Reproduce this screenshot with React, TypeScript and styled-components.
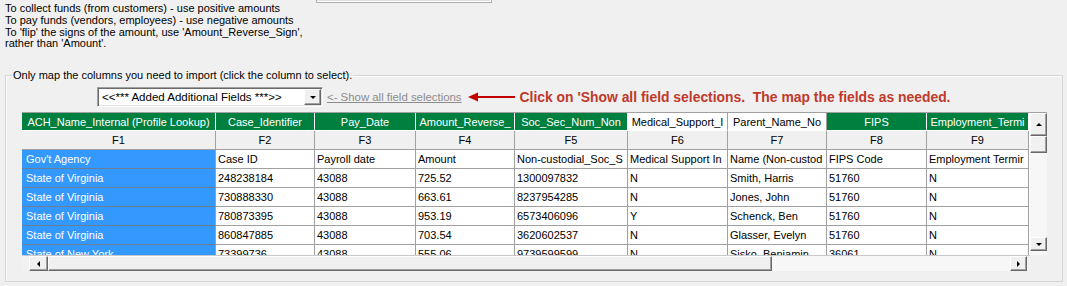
import styled, { createGlobalStyle } from "styled-components";

const GlobalStyle = createGlobalStyle`
  html, body {
    margin: 0;
    padding: 0;
    background: #f0f0f0;
  }
  body {
    width: 1067px;
    height: 286px;
    overflow: hidden;
    font-family: "Liberation Sans", Arial, sans-serif;
    font-size: 11px;
    color: #000;
  }
`;

const Page = styled.div`
  display: flex;
  flex-direction: column;
  padding-left: 5px;
  width: 1058px;
`;

const TopArea = styled.div`
  display: flex;
  align-items: flex-start;
  height: 69px;
`;

const Notes = styled.div`
  width: 311px;
  padding-top: 3px;
  line-height: 11.8px;
`;

const ClippedControl = styled.div`
  width: 174px;
  height: 2px;
  border: 1px solid #adadad;
  border-top: none;
  background: #e1e1e1;
  box-shadow: inset -1px -1px 0 #fff;
`;

const Group = styled.fieldset`
  margin: 0;
  padding: 0;
  min-width: 0;
  width: 1056px;
  border: 1px solid #d5d5d5;
  box-shadow: inset 1px 1px 0 #fff;

  legend {
    margin-left: 6px;
    padding: 0 1px;
    line-height: 13px;
  }
`;

const Content = styled.div`
  display: flex;
  flex-direction: column;
  gap: 5px;
  padding: 5px 0 10px 16px;
`;

const ComboRow = styled.div`
  display: flex;
  align-items: center;
  height: 20px;
  margin-left: 75px;
`;

const Combo = styled.div`
  display: flex;
  align-items: center;
  justify-content: space-between;
  box-sizing: border-box;
  width: 226px;
  height: 20px;
  background: #fff;
  border: 1px solid;
  border-color: #a0a0a0 #fff #fff #a0a0a0;
  box-shadow: inset 1px 1px 0 #696969, inset -1px -1px 0 #e3e3e3;
  padding: 0 1px 0 4px;
  font-size: 11.5px;
`;

const Button3D = styled.div<{ $w: number; $h: number }>`
  display: flex;
  align-items: center;
  justify-content: center;
  box-sizing: border-box;
  flex: none;
  width: ${(p) => p.$w}px;
  height: ${(p) => p.$h}px;
  background: #f0f0f0;
  border: 1px solid;
  border-color: #fff #696969 #696969 #fff;
  box-shadow: inset -1px -1px 0 #a0a0a0;
`;

const Triangle = styled.span<{ $dir: "up" | "down" | "left" | "right" }>`
  width: 0;
  height: 0;
  border: 3px solid transparent;
  ${(p) =>
    p.$dir === "up"
      ? "border-bottom: 3px solid #000; border-top-width: 0; border-left-width: 3.5px; border-right-width: 3.5px;"
      : p.$dir === "down"
      ? "border-top: 3px solid #000; border-bottom-width: 0; border-left-width: 3.5px; border-right-width: 3.5px;"
      : p.$dir === "left"
      ? "border-right: 3px solid #000; border-left-width: 0; border-top-width: 3.5px; border-bottom-width: 3.5px;"
      : "border-left: 3px solid #000; border-right-width: 0; border-top-width: 3.5px; border-bottom-width: 3.5px;"}
`;

const ShowLink = styled.span`
  margin-left: 4px;
  color: #8c8c8c;
  text-decoration: underline;
  font-size: 11.4px;
`;

const Arrow = styled.svg`
  margin-left: 6px;
  flex: none;
`;

const Callout = styled.span`
  margin-left: 5px;
  color: #c0392b;
  font-weight: bold;
  font-size: 13.9px;
  white-space: pre;
`;

const GridFrame = styled.div`
  display: grid;
  grid-template-columns: 1008px 17px;
  grid-template-rows: 143px 16px;
`;

const Table = styled.div<{ $cols: string }>`
  display: grid;
  grid-template-columns: ${(p) => p.$cols};
  grid-template-rows: 18px 19px;
  grid-auto-rows: 19px;
  overflow: hidden;
  border-top: 1px solid #a0a0a0;
  background: #fff;
`;

type CellKind = "head" | "headOff" | "field" | "key" | "data";

const Cell = styled.div<{ $kind: CellKind }>`
  box-sizing: border-box;
  display: flex;
  align-items: center;
  white-space: nowrap;
  overflow: hidden;
  border-right: 1px solid #a0a0a0;
  border-bottom: 1px solid #a0a0a0;
  padding-left: 2px;

  ${(p) =>
    p.$kind === "head" &&
    `
    justify-content: center;
    padding: 0;
    background: #00803f;
    color: #fff;
    border-right-color: #fff;
    border-bottom-color: #fff;
  `}
  ${(p) =>
    p.$kind === "headOff" &&
    `
    justify-content: center;
    padding: 0;
    background: #fff;
    color: #000;
    border-right-color: #a0a0a0;
    border-bottom-color: #fff;
  `}
  ${(p) =>
    p.$kind === "field" &&
    `
    justify-content: center;
    padding: 0;
    background: #f0f0f0;
  `}
  ${(p) =>
    p.$kind === "key" &&
    `
    padding-left: 4px;
    background: #3399ff;
    color: #fff;
    border-bottom-color: #6a7f96;
  `}
`;

const VScroll = styled.div`
  display: flex;
  flex-direction: column;
  padding-bottom: 4px;
  background: #f7f7f7;
  border-top: 1px solid #a0a0a0;
`;

const Track = styled.div`
  flex: 1;
  background: #f7f7f7;
`;

const HScroll = styled.div`
  display: flex;
  align-items: stretch;
  border-top: 1px solid #c8c8c8;
  background: #f2f2f2;
  padding-left: 7px;
  padding-right: 3px;
`;

const Thumb = styled(Button3D)`
  flex: none;
`;

type Column = { name: string; field: string; width: number; mapped: boolean };

const columns: Column[] = [
  { name: "ACH_Name_Internal (Profile Lookup)", field: "F1", width: 194, mapped: true },
  { name: "Case_Identifier", field: "F2", width: 99, mapped: true },
  { name: "Pay_Date", field: "F3", width: 101, mapped: true },
  { name: "Amount_Reverse_", field: "F4", width: 99, mapped: true },
  { name: "Soc_Sec_Num_Non", field: "F5", width: 113, mapped: true },
  { name: "Medical_Support_I", field: "F6", width: 100, mapped: false },
  { name: "Parent_Name_No", field: "F7", width: 99, mapped: false },
  { name: "FIPS", field: "F8", width: 100, mapped: true },
  { name: "Employment_Termi", field: "F9", width: 102, mapped: true },
];

const rows: string[][] = [
  ["Gov't Agency", "Case ID", "Payroll date", "Amount", "Non-custodial_Soc_S", "Medical Support In", "Name (Non-custod", "FIPS Code", "Employment Termir"],
  ["State of Virginia", "248238184", "43088", "725.52", "1300097832", "N", "Smith, Harris", "51760", "N"],
  ["State of Virginia", "730888330", "43088", "663.61", "8237954285", "N", "Jones, John", "51760", "N"],
  ["State of Virginia", "780873395", "43088", "953.19", "6573406096", "Y", "Schenck, Ben", "51760", "N"],
  ["State of Virginia", "860847885", "43088", "703.54", "3620602537", "N", "Glasser, Evelyn", "51760", "N"],
  ["State of New York", "73399736", "43088", "555.06", "9739599599", "N", "Sisko, Benjamin", "36061", "N"],
];

export default function App() {
  const cols = columns.map((c) => `${c.width}px`).join(" ");

  return (
    <>
      <GlobalStyle />
      <Page>
        <TopArea>
          <Notes>
            To collect funds (from customers) - use positive amounts
            <br />
            To pay funds (vendors, employees) - use negative amounts
            <br />
            To 'flip' the signs of the amount, use 'Amount_Reverse_Sign',
            <br />
            rather than 'Amount'.
          </Notes>
          <ClippedControl />
        </TopArea>

        <Group>
          <legend>Only map the columns you need to import (click the column to select).</legend>
          <Content>
            <ComboRow>
              <Combo>
                <span>{"<<*** Added Additional Fields ***>>"}</span>
                <Button3D $w={17} $h={16}>
                  <Triangle $dir="down" />
                </Button3D>
              </Combo>
              <ShowLink>{"<- Show all field selections"}</ShowLink>
              <Arrow width="47" height="10" viewBox="0 0 47 10">
                <line x1="8" y1="5" x2="47" y2="5" stroke="#c00000" strokeWidth="2" />
                <polygon points="0,5 10,0.5 10,9.5" fill="#c00000" />
              </Arrow>
              <Callout>{"Click on 'Show all field selections.  The map the fields as needed."}</Callout>
            </ComboRow>

            <GridFrame>
              <Table $cols={cols}>
                {columns.map((c) => (
                  <Cell key={c.field + "h"} $kind={c.mapped ? "head" : "headOff"}>
                    {c.name}
                  </Cell>
                ))}
                {columns.map((c) => (
                  <Cell key={c.field} $kind="field">
                    {c.field}
                  </Cell>
                ))}
                {rows.map((r, i) =>
                  r.map((v, j) => (
                    <Cell key={`${i}-${j}`} $kind={j === 0 ? "key" : "data"}>
                      {v}
                    </Cell>
                  ))
                )}
              </Table>

              <VScroll>
                <Button3D $w={17} $h={23}>
                  <Triangle $dir="up" />
                </Button3D>
                <Thumb $w={17} $h={17} />
                <Track />
                <Button3D $w={17} $h={14}>
                  <Triangle $dir="down" />
                </Button3D>
              </VScroll>

              <HScroll>
                <Button3D $w={19} $h={15}>
                  <Triangle $dir="left" />
                </Button3D>
                <Thumb $w={724} $h={15} />
                <Track />
                <Button3D $w={17} $h={15}>
                  <Triangle $dir="right" />
                </Button3D>
              </HScroll>
            </GridFrame>
          </Content>
        </Group>
      </Page>
    </>
  );
}
